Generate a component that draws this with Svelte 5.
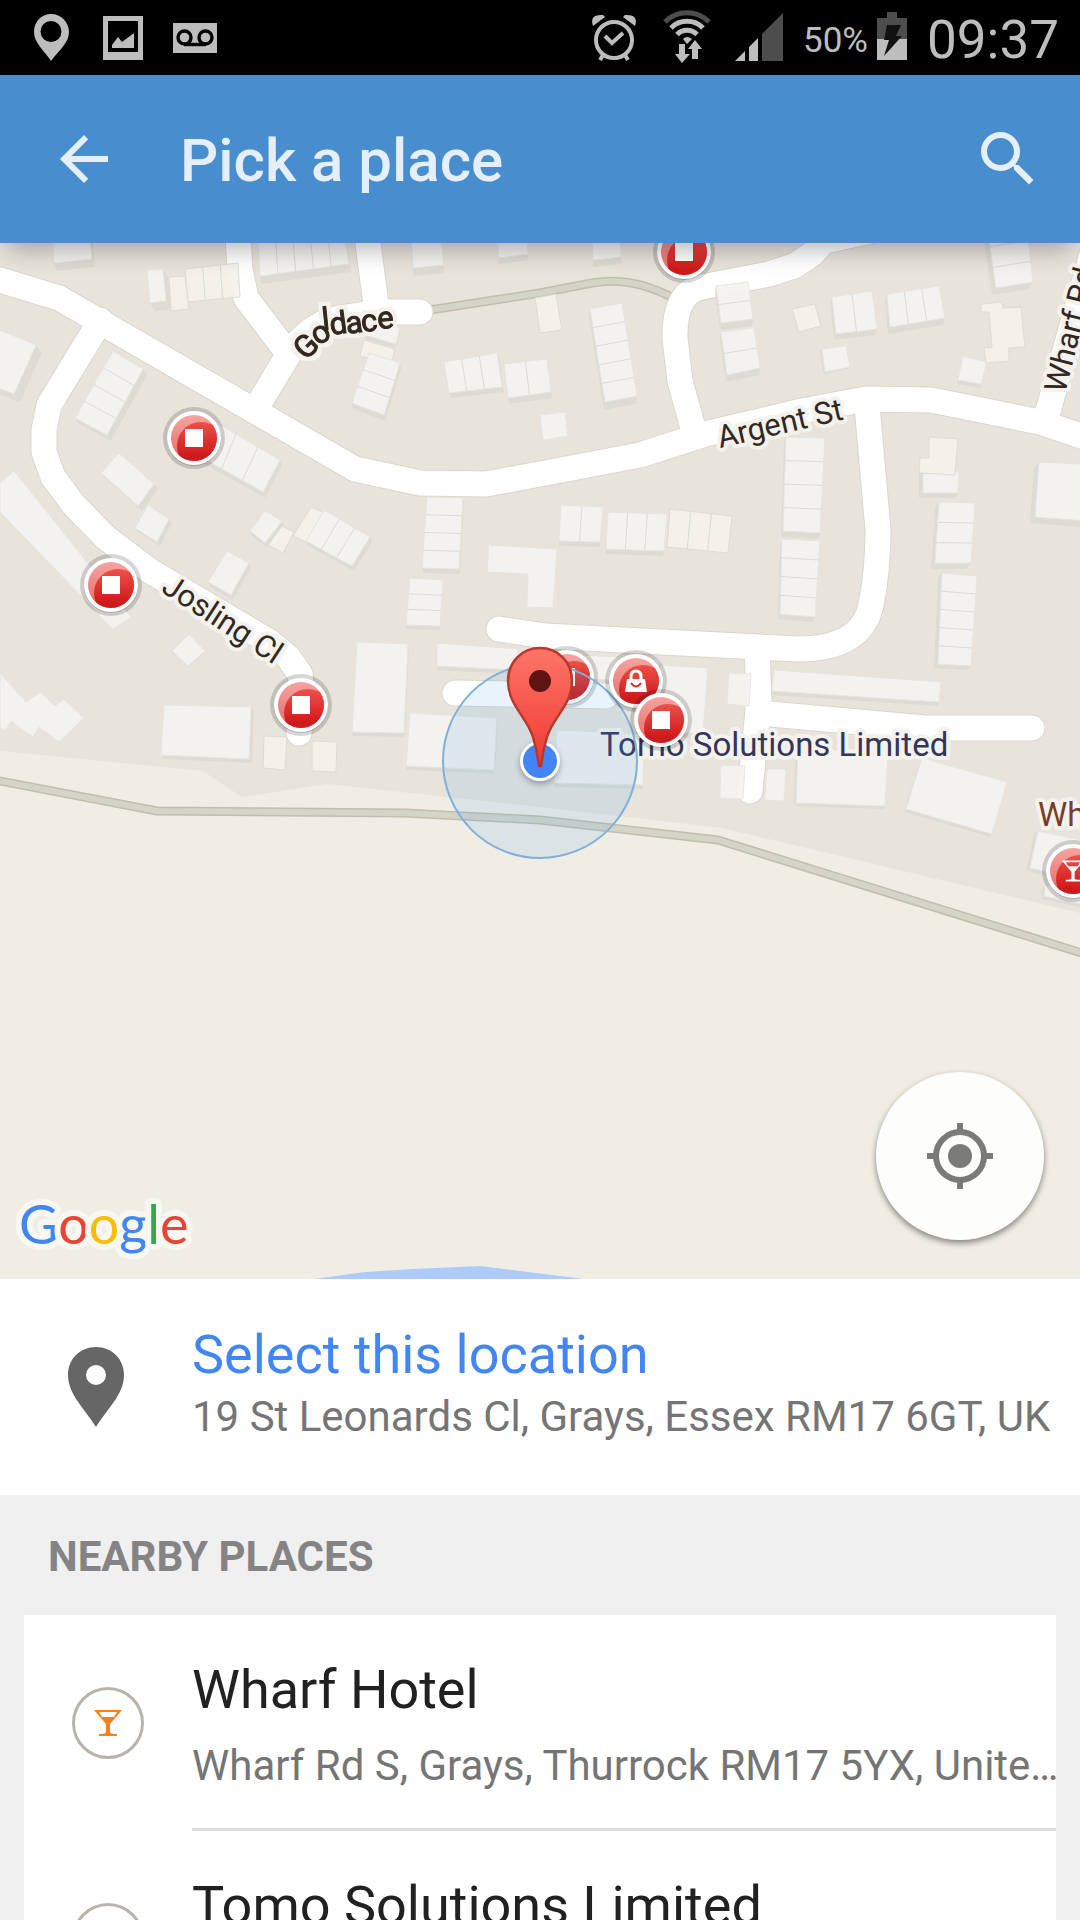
<script>
  // Buildings: four corners, number of units along the first edge, tone, side offset.
  const blocks = [
    [[52, 236, 90, 236, 92, 259, 54, 263], 1, 'c', 3, 8],
    [[147, 270, 163, 269, 166, 301, 150, 303], 1, 'c', 5, 8],
    [[169, 277, 185, 276, 189, 309, 171, 311], 1, 'w', 0, 0],
    [[185, 269, 238, 263, 240, 297, 188, 302], 3, 'w', 0, 0],
    [[258, 236, 345, 236, 349, 264, 260, 276], 5, 'c', 2, 8],
    [[411, 236, 441, 236, 444, 265, 413, 268], 1, 'c', 0, 8],
    [[497, 236, 527, 236, 528, 254, 499, 258], 1, 'c', 0, 6],
    [[-20, 322, 36, 345, 14, 394, -20, 381], 1, 'c', 6, 8],
    [[75, 418, 113, 351, 143, 369, 107, 435], 4, 'c', 4, 6],
    [[214, 421, 280, 460, 263, 492, 201, 457], 3, 'c', 2, 6],
    [[119, 453, 154, 484, 138, 506, 101, 473], 1, 'c', 4, 5],
    [[148, 505, 169, 519, 157, 542, 135, 528], 1, 'c', 3, 4],
    [[265, 511, 282, 521, 265, 543, 250, 531], 1, 'c', 2, 5],
    [[282, 526, 294, 532, 283, 553, 268, 545], 1, 'w', 0, 0],
    [[311, 507, 326, 513, 308, 543, 293, 536], 1, 'w', 0, 0],
    [[324, 510, 370, 537, 352, 566, 306, 541], 3, 'c', 2, 5],
    [[372, 325, 400, 328, 396, 344, 365, 335], 1, 'c', 0, 4],
    [[364, 340, 395, 349, 391, 365, 360, 356], 1, 'w', 0, 0],
    [[369, 353, 352, 403, 384, 415, 400, 363], 3, 'c', 1, 6],
    [[444, 362, 497, 353, 502, 387, 449, 393], 3, 'c', 2, 5],
    [[504, 364, 547, 359, 551, 392, 508, 398], 2, 'c', 1, 6],
    [[535, 298, 556, 294, 562, 330, 540, 333], 1, 'w', 0, 0],
    [[590, 309, 605, 402, 637, 396, 622, 303], 5, 'c', -1, 8],
    [[540, 415, 565, 412, 568, 436, 543, 440], 1, 'c', 0, 0],
    [[592, 236, 620, 236, 621, 257, 593, 260], 1, 'c', 0, 7],
    [[716, 286, 721, 323, 753, 319, 748, 282], 2, 'c', -1, 7],
    [[721, 332, 727, 375, 760, 368, 754, 328], 2, 'c', -1, 7],
    [[792, 309, 815, 304, 821, 326, 799, 332], 1, 'w', 0, 0],
    [[832, 297, 872, 291, 877, 329, 836, 334], 2, 'c', -2, 6],
    [[887, 294, 939, 286, 945, 318, 890, 327], 3, 'c', -2, 7],
    [[822, 349, 846, 346, 850, 367, 825, 372], 1, 'c', -2, 2],
    [[987, 226, 996, 288, 1033, 282, 1026, 220], 3, 'c', -4, 7],
    [[963, 356, 987, 362, 981, 384, 958, 380], 1, 'c', -1, 4],
    [[786, 437, 783, 531, 820, 533, 825, 438], 4, 'c', -2, 6],
    [[782, 539, 780, 614, 815, 617, 820, 541], 4, 'c', -2, 5],
    [[923, 469, 959, 471, 958, 493, 923, 493], 1, 'c', -4, 5],
    [[939, 502, 935, 563, 971, 563, 975, 503], 3, 'c', -4, 6],
    [[942, 573, 938, 664, 971, 666, 977, 576], 5, 'c', -4, 4],
    [[1039, 462, 1100, 465, 1100, 522, 1035, 517], 1, 'c', -5, 6],
    [[561, 505, 603, 507, 600, 542, 559, 541], 2, 'c', 0, 5],
    [[608, 512, 667, 514, 664, 551, 606, 549], 3, 'c', -1, 5],
    [[670, 509, 732, 516, 728, 553, 667, 547], 3, 'w', 0, 0],
    [[427, 497, 422, 568, 459, 569, 463, 498], 4, 'c', 1, 5],
    [[410, 578, 406, 625, 440, 626, 443, 580], 3, 'c', 0, 4],
    [[357, 642, 408, 644, 404, 733, 352, 732], 1, 'c', 1, 4],
    [[437, 643, 518, 649, 517, 670, 437, 666], 1, 'c', 0, 4],
    [[410, 713, 497, 718, 494, 770, 406, 766], 1, 'c', 1, 4],
    [[164, 705, 251, 707, 249, 759, 161, 755], 1, 'c', 3, 4],
    [[264, 736, 287, 737, 285, 770, 263, 768], 1, 'w', 0, 0],
    [[312, 741, 337, 742, 336, 772, 312, 771], 1, 'w', 0, 0],
    [[227, 551, 249, 563, 231, 595, 208, 582], 1, 'c', 2, 5],
    [[189, 634, 205, 651, 188, 666, 172, 651], 1, 'c', 0, 1],
    [[580, 655, 660, 659, 660, 681, 580, 679], 1, 'c', 0, 4],
    [[660, 665, 708, 668, 703, 733, 660, 733], 1, 'c', -2, 5],
    [[557, 730, 644, 734, 643, 785, 554, 783], 1, 'c', 0, 4],
    [[729, 673, 751, 674, 749, 706, 727, 704], 1, 'c', 0, 0],
    [[774, 670, 941, 682, 939, 702, 772, 691], 1, 'c', -1, 4],
    [[721, 765, 745, 766, 743, 799, 720, 798], 1, 'c', 0, 0],
    [[767, 769, 786, 769, 784, 801, 765, 800], 1, 'c', 0, 0],
    [[798, 748, 888, 753, 885, 806, 796, 803], 1, 'c', -2, 3],
    [[922, 758, 1007, 782, 992, 834, 906, 809], 1, 'c', -2, 3],
    [[1038, 831, 1100, 844, 1100, 885, 1030, 868], 1, 'c', -4, 3],
    [[1045, 885, 1100, 892, 1100, 908, 1044, 896], 1, 'c', -3, 3]
  ];

  const pair = (p, i) => p[i * 2] + ',' + p[i * 2 + 1];
  const buildings = blocks.map(([p, n, tone, dx, dy]) => {
    const moved = p.map((v, i) => v + (i % 2 ? dy : dx));
    const sides = [0, 1, 2, 3].map((i) => {
      const j = (i + 1) % 4;
      return [pair(p, i), pair(p, j), pair(moved, j), pair(moved, i)].join(' ');
    });
    const walls = [];
    for (let k = 1; k < n; k++) {
      const t = k / n;
      const mix = (a, b) => a + (b - a) * t;
      walls.push([mix(p[0], p[2]), mix(p[1], p[3]), mix(p[6], p[4]), mix(p[7], p[5])]);
    }
    return { roof: [0, 1, 2, 3].map((i) => pair(p, i)).join(' '), sides: dx || dy ? sides : [], walls, tone };
  });

  const outlines = [
    ['c', '0,483 14,471 131,617 113,629 0,512'],
    ['c', '0,673 26,702 41,692 55,706 64,699 84,718 59,742 39,727 33,737 11,721 6,730 0,728'],
    ['w', '981,304 1002,302 1003,308 1021,307 1025,347 1009,348 1009,361 986,363 984,348 992,347 989,312 981,312'],
    ['w', '929,437 958,439 955,475 919,473 920,458 929,458'],
    ['c', '489,545 557,549 553,608 527,607 528,574 487,572']
  ];

  const roads = [
    'M-10 278L0 280L59 298L355 469L420 483L486 484L540 474L640 455L705 434L802 411L866 399L931 400L1040 422L1090 439',
    'M100 320L93 333L49 405L44 430V452L53 477L74 505L105 537L150 571L270 642L288 657L300 674L302 692L299 733',
    'M238 236L240 270L246 298L284 348',
    'M255 410L290 352Q312 322 340 318L377 312H420',
    'M367 236L377 312',
    'M693 428L680 381L675 338Q674 292 702 287L769 274L794 266L811 255L824 241L870 231',
    'M1047 415L1096 240',
    'M867 405L878 530Q878 570 871 605Q862 649 798 649L545 636L499 629',
    'M455 693L606 696',
    'M757 650L759 700L753 760L750 791',
    'M759 713L925 728H1032'
  ];

  const marksBelow = [
    { x: 684, y: 252, kind: 'square' },
    { x: 194, y: 438, kind: 'square' },
    { x: 111, y: 585, kind: 'square' },
    { x: 301, y: 705, kind: 'square' },
    { x: 567, y: 677, kind: 'food' }
  ];
  const marksAbove = [
    { x: 636, y: 681, kind: 'bag' },
    { x: 661, y: 720, kind: 'square' },
    { x: 1073, y: 871, kind: 'bar' }
  ];

  const places = [
    { name: 'Wharf Hotel', address: 'Wharf Rd S, Grays, Thurrock RM17 5YX, Unite…', kind: 'bar' },
    { name: 'Tomo Solutions Limited', address: '19 St Leonards Cl, Grays, Essex RM17 6GT', kind: 'square' }
  ];
</script>

{#snippet glass()}
  <path d="M-14 -13H14L2 1V9Q2 11 9 11V13H-9V11Q-2 11 -2 9V1ZM-9 -11L-6 -6H6L9 -11Z" fill-rule="evenodd" />
{/snippet}

{#snippet marker(m)}
  <g transform="translate({m.x} {m.y})">
    <circle r="31" class="ring" />
    <circle r="27" cy="1" class="ring" />
    <circle r="27" fill="#fff" />
    <circle r="23" fill="url(#gloss)" />
    <g clip-path="url(#disc)"><circle cx="7" cy="8" r="24" fill="url(#red)" /></g>
    <g fill="#fff">
      {#if m.kind === 'square'}
        <rect x="-9" y="-9" width="18" height="18" />
      {:else if m.kind === 'bag'}
        <path d="M-9 -2H9L11 11H-11Z" />
        <path d="M-5 -1V-4Q-5 -10 0 -10T5 -4V-1" fill="none" stroke="#fff" stroke-width="3" />
        <path d="M-5 2Q0 9 5 2" fill="none" stroke="#d92a27" stroke-width="2" />
      {:else if m.kind === 'food'}
        <rect x="5" y="-9" width="3" height="18" />
      {:else}
        <g transform="scale(.8)">{@render glass()}</g>
      {/if}
    </g>
  </g>
{/snippet}

<div class="screen">
  <div class="status">
    <div class="notices">
      <svg width="48" height="75" viewBox="27 0 48 75"><path fill="#bdbdbd" fill-rule="evenodd" d="M51 14C41 14 34 22 34 32C34 43 44 50 51 61C59 50 69 43 69 32C69 22 61 14 51 14ZM51 21A10 10 0 1 1 51 42A10 10 0 0 1 51 21Z" /></svg>
      <svg width="48" height="75" viewBox="99 0 48 75"><path fill="#bdbdbd" fill-rule="evenodd" d="M103 16H143V60H103ZM108 21V52H138V21Z" /><path fill="#bdbdbd" d="M112 48V45L118 37L122 42L134 33V48Z" /></svg>
      <svg width="48" height="75" viewBox="171 0 48 75"><path fill="#bdbdbd" d="M173 23H217V53H173Z" /><g fill="none" stroke="#000" stroke-width="3.4"><circle cx="184.500" cy="37.500" r="6.500" /><circle cx="205.500" cy="37.500" r="6.500" /><path d="M184 44.500H206" /></g></svg>
    </div>
    <div class="system">
      <svg width="48" height="75" viewBox="590 0 48 75"><g fill="none" stroke="#bdbdbd"><circle cx="613" cy="40" r="18" stroke-width="4" /><path d="M604 36L611 43L622 33" stroke-width="4" /><path d="M602 55L599 60M624 55L627 60" stroke-width="4" /></g><path fill="#bdbdbd" d="M592 26Q588 14 602 15L604 17ZM634 26Q638 14 624 15L622 17Z" /></svg>
      <svg width="48" height="75" viewBox="664 0 48 75"><g fill="none" stroke-width="5"><path stroke="#4d4d4d" d="M666 22A31 31 0 0 1 710 22" /><path stroke="#bdbdbd" d="M672 28A22.500 22.500 0 0 1 704 28M678 34.500A14 14 0 0 1 698 34.500" /></g><path fill="#bdbdbd" d="M684 39Q688 35 693 39L688 44ZM680 44H686V54H691L683 63L676 54H680ZM696 40L703 49H699V59H693V49H689Z" /></svg>
      <svg width="48" height="75" viewBox="736 0 48 75"><path fill="#bdbdbd" d="M736 61L746 51V61ZM750 47L759 38V61H750Z" /><path fill="#4d4d4d" d="M763 34L784 13V61H763Z" /></svg>
      <span class="percent">50%</span>
      <svg class="battery" width="30" height="75" viewBox="877 0 30 75"><path fill="#4d4d4d" d="M887 12H897V18H907V39H877V18H887Z" /><path fill="#bdbdbd" d="M877 39H907V60H877Z" /><path fill="#111" d="M887 25H901L896 36H902L884 56L889 40H884Z" /></svg>
      <span class="clock">09:37</span>
    </div>
  </div>

  <header>
    <button aria-label="Back"><svg width="72" height="72" viewBox="0 0 24 24"><path d="M20 11H7.830l5.590-5.590L12 4l-8 8 8 8 1.410-1.410L7.830 13H20z" /></svg></button>
    <h1>Pick a place</h1>
    <button aria-label="Search"><svg width="72" height="72" viewBox="0 0 24 24"><path d="M15.500 14h-.790l-.280-.270A6.471 6.471 0 0 0 16 9.500 6.500 6.500 0 1 0 9.500 16c1.610 0 3.090-.590 4.230-1.570l.270.280v.790l5 4.990L20.490 19l-4.990-5zm-6 0C7.010 14 5 11.990 5 9.500S7.010 5 9.500 5 14 7.010 14 9.500 11.990 14 9.500 14z" /></svg></button>
  </header>

  <main class="map">
    <svg class="canvas" viewBox="0 243 1080 1036" role="img" aria-label="Map of Argent St and Josling Cl">
      <defs>
        <linearGradient id="red" x1="0" y1="0" x2="0" y2="1"><stop offset="0" stop-color="#ee5049" /><stop offset=".7" stop-color="#cf1a1b" /></linearGradient>
        <linearGradient id="gloss" x1="0" y1="0" x2="0" y2="1"><stop offset="0" stop-color="#f6a3a0" /><stop offset="1" stop-color="#e46a67" /></linearGradient>
        <linearGradient id="pin" x1="0" y1="0" x2="0" y2="1"><stop offset="0" stop-color="#fd7569" /><stop offset="1" stop-color="#f03a30" /></linearGradient>
        <clipPath id="disc"><circle r="23" /></clipPath>
        <filter id="soft" x="-50%" y="-50%" width="200%" height="200%"><feGaussianBlur stdDeviation="3" /></filter>
        <filter id="halo" x="-20%" y="-30%" width="140%" height="160%" color-interpolation-filters="sRGB">
          <feMorphology in="SourceAlpha" operator="dilate" radius="4" result="grown" />
          <feFlood flood-color="#f4f2ed" />
          <feComposite in2="grown" operator="in" />
          <feMerge><feMergeNode /><feMergeNode in="SourceGraphic" /></feMerge>
        </filter>
      </defs>
      <rect y="243" width="1080" height="1036" fill="#e8e4dc" />
      <path fill="#f0ede4" d="M0 751L203 771L242 797L327 784L540 807L722 828L1080 913V1279H0Z" />
      <path fill="#adcbff" d="M315 1279L365 1272L413 1269L480 1266L584 1279Z" />
      <g class="trail">
        <path class="edge" d="M-5 780L157 811L405 813L540 820L718 840L1085 954M430 310L540 293L592 283Q632 276 673 298" />
        <path class="fill" d="M-5 780L157 811L405 813L540 820L718 840L1085 954M430 310L540 293L592 283Q632 276 673 298" />
      </g>
      {#each roads as d}<path {d} class="road casing" />{/each}
      {#each roads as d}<path {d} class="road" />{/each}

      <g opacity=".93">
        {#each buildings as b}
          {#each b.sides as s}<polygon points={s} class="side" />{/each}
          <polygon points={b.roof} class={b.tone} />
          {#each b.walls as w}<line x1={w[0]} y1={w[1]} x2={w[2]} y2={w[3]} class="wall" />{/each}
        {/each}
        {#each outlines as [tone, points]}<polygon {points} class={tone} />{/each}
      </g>

      <g class="street">
        <text class="outlined" transform="translate(720 448) rotate(-13)">Argent St</text>
        <text class="outlined" transform="translate(160 591) rotate(33)">Josling Cl</text>
        <text class="outlined" transform="translate(1065 394) rotate(-76)">Wharf Rd</text>
        <text class="bend" filter="url(#halo)" x="306 318 323 331 347 362 378" y="361 346 330 335 334 332 329" rotate="-45 -32 -6 -8 -8 -6 -5">Goldace</text>
      </g>
      {#each marksBelow as m}{@render marker(m)}{/each}
      <text class="label outlined business" x="600" y="756">Tomo Solutions Limited</text>
      <circle cx="540" cy="761" r="97" fill="#4aa3e6" fill-opacity=".13" stroke="#7fb0dc" stroke-width="2" />
      <text class="label outlined hotel" x="1038" y="826">Wharf Hotel</text>
      {#each marksAbove as m}{@render marker(m)}{/each}

      <circle cx="540" cy="764" r="20" fill="#000" opacity=".3" filter="url(#soft)" />
      <circle cx="540" cy="761" r="20" fill="#fff" />
      <circle cx="540" cy="761" r="17" fill="#4285f4" />
      <path d="M540 648C522 648 508 662 508 681C508 705 527 717 533 737C537 750 538 757 539 766H541C542 757 543 750 547 737C553 717 572 705 572 681C572 662 558 648 540 648Z" fill="url(#pin)" stroke="#b7382f" stroke-width="2.500" />
      <circle cx="540" cy="681" r="11" fill="#5d1412" />

      <text class="google" x="19" y="1244"><tspan fill="#4285f4">G</tspan><tspan fill="#ea4335">o</tspan><tspan fill="#fbbc05">o</tspan><tspan fill="#4285f4">g</tspan><tspan fill="#34a853">l</tspan><tspan fill="#ea4335">e</tspan></text>
    </svg>
    <button class="locate" aria-label="My location">
      <svg width="72" height="72" viewBox="0 0 24 24"><circle cx="12" cy="12" r="4" fill="#7a7b78" /><path fill="none" stroke="#7a7b78" stroke-width="2" d="M12 1V4M12 20V23M1 12H4M20 12H23" /><circle cx="12" cy="12" r="8" fill="none" stroke="#7a7b78" stroke-width="2" /></svg>
    </button>
  </main>

  <button class="select">
    <svg width="56" height="80" viewBox="68 1347 56 80"><path fill="#666" fill-rule="evenodd" d="M96 1347C80 1347 68 1359 68 1375C68 1394 84 1408 96 1427C108 1408 124 1394 124 1375C124 1359 112 1347 96 1347ZM96 1365A10 10 0 1 1 96 1385A10 10 0 0 1 96 1365Z" /></svg>
    <span class="lines">
      <span class="name">Select this location</span>
      <span class="address">19 St Leonards Cl, Grays, Essex RM17 6GT, UK</span>
    </span>
  </button>

  <section>
    <h2>NEARBY PLACES</h2>
    <ul>
      {#each places as place}
        <li>
          <button class="place">
            <span class="badge">
              <svg width="32" height="32" viewBox="-16 -16 32 32" fill="#f58220">
                {#if place.kind === 'bar'}{@render glass()}{:else}<rect x="-9" y="-9" width="18" height="18" />{/if}
              </svg>
            </span>
            <span class="lines">
              <span class="name">{place.name}</span>
              <span class="address">{place.address}</span>
            </span>
          </button>
        </li>
      {/each}
    </ul>
  </section>
</div>

<style>
  :global(body) {
    margin: 0;
    background: #f0f0f0;
  }
  .screen {
    display: flex;
    flex-direction: column;
    height: 100vh;
    overflow: hidden;
    font-family: Roboto, 'Noto Sans', sans-serif;
  }
  svg {
    display: block;
    flex: none;
  }
  button {
    border: 0;
    padding: 0;
    background: none;
    font: inherit;
    text-align: left;
    cursor: pointer;
  }
  .status {
    flex: none;
    display: flex;
    justify-content: space-between;
    height: 75px;
    padding: 0 21px 0 27px;
    background: #000;
    color: #bdbdbd;
  }
  .status svg {
    overflow: visible;
  }
  .notices,
  .system {
    display: flex;
    align-items: center;
    gap: 24px;
  }
  .percent {
    margin-left: -4px;
    font-size: 35px;
    line-height: 75px;
    padding-top: 5px;
  }
  .battery {
    margin-left: -15px;
  }
  .clock {
    margin-left: -4px;
    font-size: 53px;
    line-height: 75px;
    padding-top: 5px;
  }
  header {
    position: relative;
    z-index: 1;
    flex: none;
    display: flex;
    align-items: center;
    height: 168px;
    padding: 0 36px 0 48px;
    background: #488ecf;
    color: #e6eff9;
    box-shadow: 0 12px 24px -6px rgba(0, 0, 0, 0.3);
  }
  header svg {
    fill: #e6eff9;
  }
  h1 {
    flex: 1;
    margin: 0;
    padding: 4px 0 0 60px;
    font-size: 60px;
    font-weight: 500;
    line-height: 72px;
  }
  .map {
    position: relative;
    flex: none;
  }
  .canvas {
    width: 100%;
    height: auto;
  }
  .road {
    fill: none;
    stroke: #fff;
    stroke-width: 25;
    stroke-linecap: round;
    stroke-linejoin: round;
  }
  .road.casing {
    stroke: #dbd6cb;
    stroke-width: 27;
  }
  .trail path {
    fill: none;
    stroke-linejoin: round;
  }
  .trail .edge {
    stroke: #c2bdae;
    stroke-width: 9;
  }
  .trail .fill {
    stroke: #d4d4c8;
    stroke-width: 6;
  }
  .side {
    fill: #dddbd3;
  }
  .c {
    fill: #f5f4f0;
    stroke: #e6e5e0;
  }
  .w {
    fill: #f5f2eb;
    stroke: #dddad4;
  }
  .wall {
    stroke: #dbdad5;
  }
  .ring {
    fill: #000;
    fill-opacity: 0.16;
  }
  .outlined {
    stroke: #f4f2ed;
    stroke-width: 8;
    stroke-linejoin: round;
    paint-order: stroke;
  }
  .label {
    font-size: 33px;
  }
  .street {
    font-size: 31px;
    fill: #33271f;
  }
  .bend {
    stroke: #33271f;
    stroke-width: 1;
  }
  .business {
    fill: #32355c;
  }
  .hotel {
    fill: #7a3b28;
  }
  .google {
    font-family: Lato, sans-serif;
    font-size: 54px;
    font-weight: 400;
    stroke: #f9f7f2;
    stroke-width: 12;
    stroke-linejoin: round;
    paint-order: stroke;
  }
  .locate {
    position: absolute;
    right: 36px;
    bottom: 39px;
    display: grid;
    place-items: center;
    width: 168px;
    height: 168px;
    border-radius: 50%;
    background: #fdfdfb;
    box-shadow: 0 3px 6px rgba(0, 0, 0, 0.45);
  }
  .select {
    flex: none;
    display: flex;
    align-items: center;
    gap: 68px;
    height: 216px;
    padding: 0 24px 0 68px;
    background: #fff;
  }
  .lines {
    display: flex;
    flex-direction: column;
    min-width: 0;
  }
  .name {
    font-size: 54px;
    line-height: 64px;
    color: #212121;
    white-space: nowrap;
  }
  .address {
    font-size: 42px;
    line-height: 60px;
    color: #757575;
    white-space: nowrap;
  }
  .select .lines {
    padding-bottom: 4px;
  }
  .select .name {
    color: #4285f4;
  }
  section {
    flex: 1;
    min-height: 0;
    padding: 0 24px;
    background: #f0f0f0;
  }
  h2 {
    margin: 0;
    padding: 4px 24px 0;
    font-size: 42px;
    font-weight: 700;
    line-height: 116px;
    color: #848484;
  }
  ul {
    margin: 0;
    padding: 0;
    list-style: none;
    background: #fff;
  }
  .place {
    display: flex;
    align-items: center;
    gap: 48px;
    width: 100%;
    height: 216px;
    padding-left: 48px;
  }
  .place .lines {
    flex: 1;
    box-sizing: border-box;
    height: 216px;
    justify-content: center;
    gap: 14px;
    padding-top: 10px;
    border-bottom: 3px solid #dcdcdc;
  }
  .badge {
    flex: none;
    display: grid;
    place-items: center;
    box-sizing: border-box;
    width: 72px;
    height: 72px;
    border: 3px solid #b8b4aa;
    border-radius: 50%;
  }
</style>
